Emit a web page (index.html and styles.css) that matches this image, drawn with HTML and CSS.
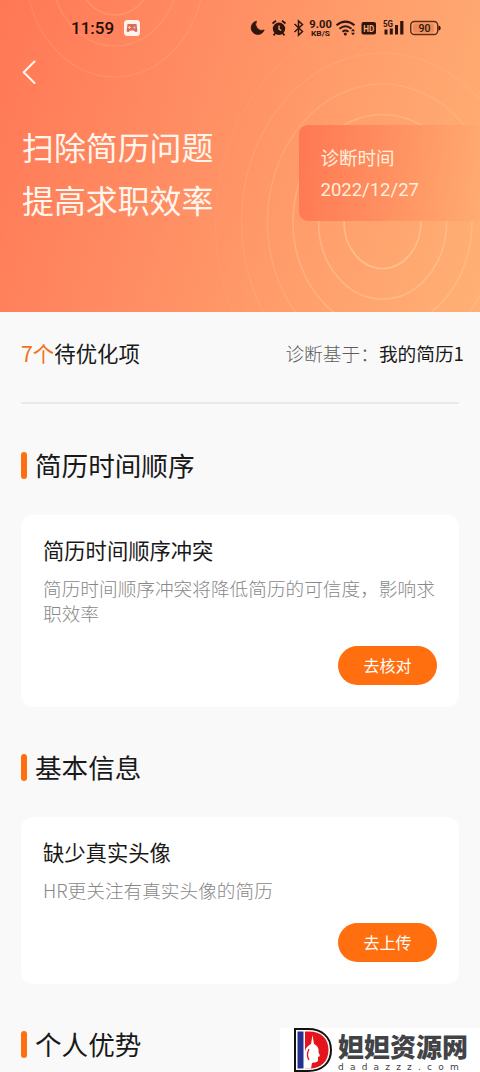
FILE: index.html
```html
<!DOCTYPE html>
<html lang="zh-CN">
<head>
<meta charset="utf-8">
<title>简历诊断</title>
<link rel="stylesheet" href="styles.css">
</head>
<body>
<div class="screen">
  <header class="hero">
    <svg class="rings" width="480" height="312" viewBox="0 0 480 312" fill="none" stroke="#ffd8aa" stroke-width="1.600">
      <ellipse cx="382.500" cy="222" rx="38.500" ry="46.500" opacity=".5"/>
      <ellipse cx="382.500" cy="222" rx="64" ry="77" opacity=".38"/>
      <ellipse cx="382.500" cy="222" rx="89.500" ry="107.500" opacity=".3"/>
      <ellipse cx="382.500" cy="222" rx="115" ry="138" opacity=".2"/>
      <ellipse cx="382.500" cy="222" rx="141" ry="169" opacity=".13"/>
      <ellipse cx="382.500" cy="222" rx="167" ry="200" opacity=".06"/>
      <ellipse cx="115" cy="-31" rx="38.500" ry="46" opacity=".2"/>
      <ellipse cx="115" cy="-31" rx="64" ry="77" opacity=".15"/>
      <ellipse cx="115" cy="-31" rx="89.500" ry="108" opacity=".11"/>
    </svg>
    <div class="status">
      <span class="clock">11:59</span>
      <svg class="game" width="16" height="16" viewBox="0 0 16 16">
        <rect width="16" height="16" rx="3.500" fill="#fff3ec"/>
        <path d="M3.500 4h9l1 7.500-2 .5-2-1.500h-3l-2 1.500-2-.5z" fill="#d96b66"/>
        <path d="M5.500 6v3M4 7.500h3" stroke="#ffd27a"/>
        <circle cx="10.500" cy="7.500" r="1" fill="#ffd27a"/>
      </svg>
      <svg class="tray" width="192" height="20" viewBox="0 0 192 20" fill="#2f150c">
        <path d="M6.500 3.200A6.700 6.700 0 1 0 14.200 12 6.200 6.200 0 0 1 6.500 3.200z" stroke="#2f150c" stroke-width=".8" stroke-linejoin="round"/>
        <circle cx="29" cy="10.800" r="6.200"/>
        <path d="M22.500 5.500l3.500-2.800M35.500 5.500L32 2.700M25 15.500l-1.500 1.800M33 15.500l1.500 1.800" stroke="#2f150c" stroke-width="1.800"/>
        <path d="M29 7.500v3.700l2.200 1.300" stroke="#ff9e70" stroke-width="1.400" fill="none"/>
        <path d="M44.500 6l8 7.500-4 3.700V3l4 3.500-8 7.500" fill="none" stroke="#2f150c" stroke-width="1.500"/>
        <text x="59.300" y="9.900" class="speed" textLength="22.500" lengthAdjust="spacingAndGlyphs">9.00</text>
        <text x="61" y="18" class="unit" textLength="19" lengthAdjust="spacingAndGlyphs">KB/S</text>
        <g fill="none" stroke="#2f150c" stroke-width="2">
          <path d="M86.500 7.300q9-7.300 18 0M89.500 10.700q6-4.800 12 0M92.500 13.700q3-2.200 6 0"/>
        </g>
        <circle cx="95.300" cy="16" r="1.500"/>
        <path d="M101 13.200l2-2.500 2 2.500zM101 14.700l2 2.500 2-2.500z"/>
        <rect x="111.500" y="4" width="14.500" height="12.500" rx="2"/>
        <text x="113.200" y="13.800" class="hd" textLength="11" lengthAdjust="spacingAndGlyphs">HD</text>
        <text x="133" y="8.500" class="net" textLength="10" lengthAdjust="spacingAndGlyphs">5G</text>
        <path d="M134.500 11.500h3v5h-3zM139.800 10.500h3v6h-3zM145 7h3v9.500h-3zM150.200 3h3.200v13.500h-3.200z"/>
        <rect x="160.700" y="3.500" width="27" height="13" rx="3.800" fill="none" stroke="#5a2d18" stroke-width="1.400"/>
        <rect x="163" y="5.500" width="21" height="9" rx="2" fill="#e17e52" opacity=".65"/>
        <path d="M188.500 7.500q2.200 0 2.200 2.500t-2.200 2.500z"/>
        <text x="168.500" y="13.700" class="level">90</text>
      </svg>
    </div>
    <svg class="back" width="16" height="26" viewBox="0 0 16 26" fill="none" stroke="#fff6ee" stroke-width="2" stroke-linecap="round" stroke-linejoin="round"><path d="M13.500 2.500L2.700 13.200 13.500 24"/></svg>
    <div class="banner">
      <h1 class="title">扫除简历问题<br>提高求职效率</h1>
      <div class="date-card">
        <div>诊断时间</div>
        <div class="date">2022/12/27</div>
      </div>
    </div>
  </header>
  <main class="content">
    <div class="summary">
      <div class="pending"><span class="count">7个</span>待优化项</div>
      <div class="basis">诊断基于：<span class="resume">我的简历1</span></div>
    </div>
    <section class="group">
      <h2 class="heading">简历时间顺序</h2>
      <article class="card">
        <h3 class="card-title">简历时间顺序冲突</h3>
        <p class="desc">简历时间顺序冲突将降低简历的可信度，影响求职效率</p>
        <button class="action">去核对</button>
      </article>
    </section>
    <section class="group">
      <h2 class="heading">基本信息</h2>
      <article class="card">
        <h3 class="card-title">缺少真实头像</h3>
        <p class="desc">HR更关注有真实头像的简历</p>
        <button class="action">去上传</button>
      </article>
    </section>
    <section class="group">
      <h2 class="heading">个人优势</h2>
    </section>
  </main>
  <div class="watermark">
    <svg width="40" height="44" viewBox="0 0 40 44">
      <path d="M1 1h13c14 0 23 8 23 21s-9 21-23 21H1z" fill="#fff" stroke="#111" stroke-width="2"/>
      <path d="M3.500 3.500h6v37h-6z" fill="#25308f"/>
      <path d="M11 3.500h4c12 0 19.500 7 19.500 18.500S27 40.500 15 40.500h-4z" fill="#e5141c"/>
      <path d="M18.500 7l1.500 9c4 2 5 5 4.500 8l1.500 4-2 1v4c-2 2-4 1-6 2l-1 5.500h-6V23c1-4 4-6 6-7z" fill="#fff"/>
      <path d="M15 21q-3 6 0 11" fill="none" stroke="#e5141c" stroke-width="1.300"/>
    </svg>
    <div class="brand">
      <div class="brand-name">妲妲资源网</div>
      <div class="brand-url">dadazzz.com</div>
    </div>
  </div>
</div>
</body>
</html>
```
FILE: styles.css
```css
* { box-sizing: border-box; }
body { margin: 0; font-family: "Noto Sans CJK SC", sans-serif; color: #191919; background: #f9f9f9; }
h1, h2, h3, p { margin: 0; font-weight: 400; }
.screen { position: relative; width: 480px; height: 1072px; overflow: hidden; }
.hero { position: relative; height: 312px; background: linear-gradient(107deg, #ff7855 0%, #ff8f64 42%, #ff9f6c 68%, #ffb074 100%); }
.rings { position: absolute; inset: 0; }
.status { position: relative; display: flex; align-items: center; height: 56px; padding-left: 71px; }
.clock { width: 53px; font: 500 17px/20px Roboto, sans-serif; color: #260d07; }
.tray { margin-left: 110px; }
.speed { font: 700 11px Roboto, sans-serif; }
.unit { font: 700 8px Roboto, sans-serif; }
.hd { font: 700 9.500px Roboto, sans-serif; fill: #ffa675; }
.net { font: 700 8.500px Roboto, sans-serif; }
.level { font: 500 10.500px Roboto, sans-serif; }
.back { position: relative; display: block; margin: 3px 0 0 21px; }
.banner { position: relative; display: flex; justify-content: space-between; padding: 36px 0 0 22px; }
.title { margin-top: -1px; font-size: 31.900px; line-height: 53px; color: #fff6ee; }
.date-card { width: 181px; height: 96px; margin-top: 4px; padding: 16px 21.500px; border-radius: 9px 0 0 9px; background: linear-gradient(97deg, #ff7853 0%, #ff8f60 48%, #ffab71 100%); color: #fff0dc; font-size: 18.500px; line-height: 33px; }
.date { font-family: Roboto, sans-serif; font-size: 18.500px; letter-spacing: 0; }
.content { padding: 0 21px; }
.summary { display: flex; justify-content: space-between; height: 92px; margin-bottom: 36px; padding-top: 26px; line-height: 30px; border-bottom: 2px solid #eaeaea; }
.pending { font-size: 21.400px; }
.count { color: #f37021; }
.basis { margin-right: -5px; font-size: 18.700px; color: #5c5c5c; font-weight: 300; }
.resume { color: #191919; font-weight: 400; }
.group { margin-bottom: 35px; }
.heading { display: flex; align-items: center; gap: 8px; height: 50px; margin-bottom: 25px; font-size: 26.600px; line-height: 50px; }
.heading::before { content: ""; width: 6px; height: 27px; border-radius: 3px; background: #ff6f0f; }
.card { display: flex; flex-direction: column; padding: 20px 22px 22px; border-radius: 12px; background: #fff; }
.card-title { font-size: 21.300px; line-height: 30px; }
.desc { margin-top: 10px; font-size: 18.670px; line-height: 25px; color: #888; font-weight: 300; }
.action { align-self: flex-end; width: 99px; height: 39px; margin-top: 21px; padding: 0; border: 0; border-radius: 20px; background: #ff6f0f; color: #fff; font: 400 16px/39px "Noto Sans CJK SC", sans-serif; }
.watermark { position: absolute; right: 0; bottom: 0; display: flex; gap: 4px; width: 200px; height: 44px; padding-left: 14px; background: #fff; color: #424347; overflow: hidden; }
.brand-name { font-size: 26px; line-height: 35px; font-weight: 900; white-space: nowrap; }
.brand-url { font: 9px/9px "DejaVu Sans", sans-serif; letter-spacing: 6.200px; white-space: nowrap; }
```
